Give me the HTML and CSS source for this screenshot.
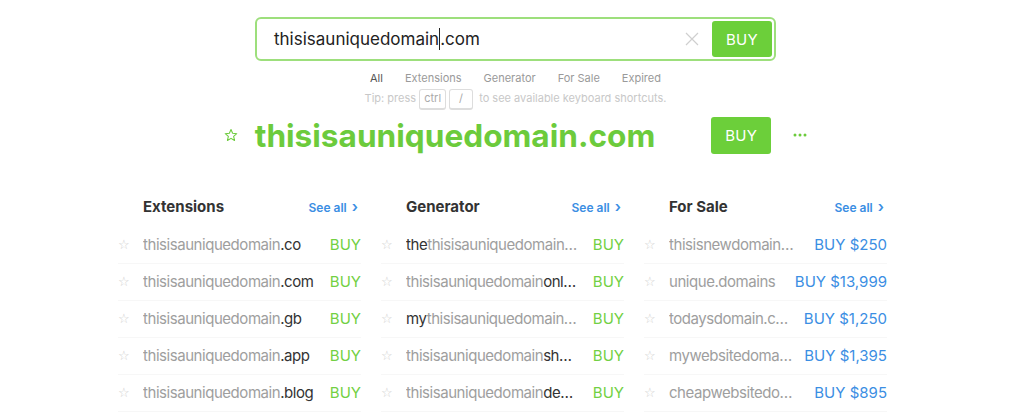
FILE: index.html
```html
<!DOCTYPE html>
<html lang="en">
<head>
  <meta charset="UTF-8" />
  <title>Domain search</title>
  <link rel="stylesheet" href="styles.css">
</head>
<body>

<header class="search-area">
  <div class="search-box">
    <span class="search-text">thisisauniquedomain<span class="caret"></span>.com</span>
    <svg class="clear" width="14" height="14" viewBox="0 0 14 14"><path d="M1 1L13 13M13 1L1 13" stroke="#cfcfcf" stroke-width="1.2" fill="none"/></svg>
    <button class="btn-buy">BUY</button>
  </div>
  <nav class="tabs">
    <a class="active">All</a>
    <a>Extensions</a>
    <a>Generator</a>
    <a>For Sale</a>
    <a>Expired</a>
  </nav>
  <p class="tip">Tip: press <kbd>ctrl</kbd><kbd>/</kbd> to see available keyboard shortcuts.</p>
</header>

<section class="result">
  <svg class="star" width="14" height="14" viewBox="0 0 24 24"><path d="M12 2.5l2.8 6.6 7.1.6-5.4 4.7 1.6 7-6.1-3.7-6.1 3.7 1.6-7-5.4-4.7 7.1-.6z" fill="none" stroke="#6ccb3c" stroke-width="1.8" stroke-linejoin="round"/></svg>
  <h1 class="result-name">thisisauniquedomain.com</h1>
  <button class="btn-buy big">BUY</button>
  <svg class="more" width="14" height="4" viewBox="0 0 14 4"><circle cx="2" cy="2" r="1.5" fill="#6ccb3c"/><circle cx="7" cy="2" r="1.5" fill="#6ccb3c"/><circle cx="12" cy="2" r="1.5" fill="#6ccb3c"/></svg>
</section>

<section class="columns">
  <div class="col">
    <div class="col-head"><h2>Extensions</h2><a class="see-all">See all <span>&rsaquo;</span></a></div>
    <ul>
      <li><i class="row-star">&#9734;</i><span class="dom"><span class="base">thisisauniquedomain</span>.co</span><span class="buy">BUY</span></li>
      <li><i class="row-star">&#9734;</i><span class="dom"><span class="base">thisisauniquedomain</span>.com</span><span class="buy">BUY</span></li>
      <li><i class="row-star">&#9734;</i><span class="dom"><span class="base">thisisauniquedomain</span>.gb</span><span class="buy">BUY</span></li>
      <li><i class="row-star">&#9734;</i><span class="dom"><span class="base">thisisauniquedomain</span>.app</span><span class="buy">BUY</span></li>
      <li><i class="row-star">&#9734;</i><span class="dom"><span class="base">thisisauniquedomain</span>.blog</span><span class="buy">BUY</span></li>
    </ul>
  </div>
  <div class="col">
    <div class="col-head"><h2>Generator</h2><a class="see-all">See all <span>&rsaquo;</span></a></div>
    <ul>
      <li><i class="row-star">&#9734;</i><span class="dom">the<span class="base">thisisauniquedomain…</span></span><span class="buy">BUY</span></li>
      <li><i class="row-star">&#9734;</i><span class="dom"><span class="base">thisisauniquedomain</span>onl…</span><span class="buy">BUY</span></li>
      <li><i class="row-star">&#9734;</i><span class="dom">my<span class="base">thisisauniquedomain…</span></span><span class="buy">BUY</span></li>
      <li><i class="row-star">&#9734;</i><span class="dom"><span class="base">thisisauniquedomain</span>sh…</span><span class="buy">BUY</span></li>
      <li><i class="row-star">&#9734;</i><span class="dom"><span class="base">thisisauniquedomain</span>de…</span><span class="buy">BUY</span></li>
    </ul>
  </div>
  <div class="col sale">
    <div class="col-head"><h2>For Sale</h2><a class="see-all">See all <span>&rsaquo;</span></a></div>
    <ul>
      <li><i class="row-star">&#9734;</i><span class="dom base">thisisnewdomain…</span><span class="buy">BUY $250</span></li>
      <li><i class="row-star">&#9734;</i><span class="dom base">unique.domains</span><span class="buy">BUY $13,999</span></li>
      <li><i class="row-star">&#9734;</i><span class="dom base">todaysdomain.c…</span><span class="buy">BUY $1,250</span></li>
      <li><i class="row-star">&#9734;</i><span class="dom base">mywebsitedoma…</span><span class="buy">BUY $1,395</span></li>
      <li><i class="row-star">&#9734;</i><span class="dom base">cheapwebsitedo…</span><span class="buy">BUY $895</span></li>
    </ul>
  </div>
</section>

</body>
</html>
```

FILE: styles.css
```css
body {
  margin: 0;
  padding-left: 7px;
  background: #fff;
  color: #333;
  font-family: Inter, "Liberation Sans", sans-serif;
}
.search-area {
  width: 521px;
  margin: 17px auto 0;
}
.search-box {
  display: flex;
  align-items: center;
  height: 44px;
  box-sizing: border-box;
  border: 2px solid #9ddf7c;
  border-radius: 6px;
  padding: 0 2px 0 17px;
}
.search-text {
  flex: 1;
  font-size: 17px;
  color: #222;
}
.caret {
  display: inline-block;
  width: 1px;
  height: 22px;
  background: #222;
  vertical-align: -5px;
}
.clear {
  margin-right: 13px;
}
.btn-buy {
  width: 60px;
  height: 36px;
  border: 0;
  border-radius: 3px;
  background: #6ccf3a;
  color: #fff;
  font-family: inherit;
  font-size: 15px;
  letter-spacing: 0.3px;
}
.btn-buy.big {
  height: 37px;
}
.tabs {
  display: flex;
  justify-content: center;
  gap: 22px;
  margin-top: 9px;
  font-size: 11px;
  line-height: 16px;
  color: #9a9a9a;
}
.tabs .active {
  color: #555;
}
.tip {
  margin: 2px 0 0;
  text-align: center;
  font-size: 11px;
  line-height: 20px;
  color: #c8c8c8;
}
kbd {
  display: inline-block;
  min-width: 14px;
  height: 18px;
  line-height: 17px;
  padding: 0 4px;
  margin-right: 3px;
  border: 1px solid #ddd;
  border-bottom-width: 2px;
  border-radius: 3px;
  font-family: inherit;
  font-size: 11px;
  color: #aaa;
  text-align: center;
  vertical-align: middle;
}
.result {
  display: flex;
  align-items: center;
  justify-content: center;
  margin-top: 7px;
  height: 37px;
}
.result .star {
  margin-right: 17px;
}
.result-name {
  margin: 0 56px 0 0;
  font-size: 31.6px;
  font-weight: 700;
  color: #6ccb3c;
}
.result .more {
  margin-left: 22px;
}
.columns {
  display: grid;
  grid-template-columns: repeat(3, 243px);
  column-gap: 20px;
  width: 769px;
  margin: 38px auto 0;
  padding-right: 26px;
}
.col-head {
  display: flex;
  align-items: center;
  justify-content: space-between;
  height: 30px;
  padding: 0 3px 0 25px;
  margin-bottom: 5px;
}
h2 {
  margin: 0;
  font-size: 15px;
  font-weight: 700;
  color: #333;
}
.see-all {
  font-size: 12px;
  font-weight: 600;
  color: #3b8ee3;
}
.see-all span {
  font-size: 15px;
  margin-left: 2px;
}
ul {
  list-style: none;
  margin: 0;
  padding: 0;
}
li {
  display: flex;
  align-items: center;
  height: 37px;
  box-sizing: border-box;
  border-bottom: 1px solid #f7f7f7;
  font-size: 15px;
  letter-spacing: -0.45px;
}
.row-star {
  width: 25px;
  font-style: normal;
  font-family: "DejaVu Sans", sans-serif;
  font-size: 13px;
  color: #d0d0d0;
}
.dom {
  flex: 1;
  min-width: 0;
  overflow: hidden;
  white-space: nowrap;
  text-overflow: ellipsis;
  color: #333;
}
.base {
  color: #9e9e9e;
}
.buy {
  margin-left: 8px;
  color: #72d043;
  white-space: nowrap;
  letter-spacing: 0;
}
.sale .buy {
  color: #3b8ee3;
}
```
